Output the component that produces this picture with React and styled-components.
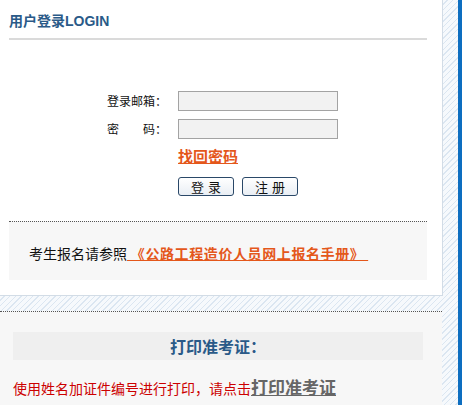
import React from "react";
import styled, { createGlobalStyle } from "styled-components";

const GlobalStyle = createGlobalStyle`
  html, body { margin: 0; padding: 0; }
  body {
    font-family: "Noto Sans CJK SC", "Liberation Sans", sans-serif;
    background: #fff;
  }
  *, *::before, *::after { box-sizing: border-box; }
`;

const Page = styled.div`
  width: 462px;
  height: 405px;
  overflow: hidden;
  display: flex;
  background-color: #f6f9fc;
  background-image: repeating-linear-gradient(
    135deg,
    #dbe6f1 0px,
    #dbe6f1 1px,
    #f6f9fc 1px,
    #f6f9fc 4px
  );
`;

const Main = styled.div`
  width: 443px;
  display: flex;
  flex-direction: column;
`;

const Gutter = styled.div`
  flex: 1;
`;

const BlueBar = styled.div`
  width: 4px;
  background: #0d6ec0;
`;

const LoginPanel = styled.section`
  height: 296px;
  background: #fff;
  border-right: 1px solid #d2dce6;
  border-bottom: 1px solid #d2dce6;
  padding: 13px 15px 0 9px;
  display: flex;
  flex-direction: column;
`;

const Title = styled.h2`
  margin: 0;
  font-size: 14px;
  line-height: 16px;
  font-weight: bold;
  color: #2a5a88;
  font-family: "Liberation Sans", "Noto Sans CJK SC", sans-serif;
`;

const TitleRule = styled.div`
  margin-top: 9px;
  height: 2px;
  background: #dadada;
`;

const Form = styled.div`
  margin-top: 51px;
  display: grid;
  grid-template-columns: 158px 160px;
  column-gap: 11px;
  row-gap: 8px;
  align-items: center;
`;

const Label = styled.label`
  text-align: right;
  font-size: 12px;
  line-height: 20px;
  height: 20px;
  color: #111;
  white-space: pre;
`;

const Input = styled.input`
  display: block;
  width: 160px;
  height: 20px;
  margin: 0;
  border: 1px solid #a3a3a3;
  background: #f2f2f2;
  outline: none;
`;

const Cell = styled.div`
  grid-column: 2;
  display: flex;
  height: 18px;
`;

const Forgot = styled.a`
  display: block;
  font-size: 15px;
  line-height: 17px;
  height: 18px;
  font-weight: bold;
  color: #e4571b;
  text-decoration: underline;
  cursor: pointer;
`;

const Buttons = styled.div`
  grid-column: 2;
  display: flex;
  gap: 8px;
  margin-top: 4px;
`;

const Button = styled.button`
  width: 56px;
  height: 19px;
  padding: 0;
  border: 1px solid #2a4868;
  border-radius: 3px;
  background: linear-gradient(#ffffff, #e9eef4);
  font-family: "Noto Sans CJK SC", sans-serif;
  font-size: 13px;
  line-height: 17px;
  color: #111;
  letter-spacing: 4px;
  text-indent: 4px;
  cursor: pointer;
`;

const Notice = styled.div`
  margin-top: 25px;
  border-top: 1px dotted #555;
  background: #f7f7f7;
  padding: 4px 0 0 20px;
  height: 59px;
  display: flex;
  align-items: center;
  font-size: 14px;
  color: #111;
`;

const ManualLink = styled.a`
  font-weight: bold;
  color: #e4571b;
  text-decoration: underline;
  white-space: pre;
  letter-spacing: 0.6px;
  cursor: pointer;
`;

const PrintPanel = styled.section`
  width: 442px;
  margin-top: 15px;
  flex: 1;
  border-top: 1px dotted #555;
  background: #f7f7f7;
  padding: 20px 19px 0 13px;
`;

const PrintHeader = styled.h3`
  margin: 0;
  height: 28px;
  line-height: 28px;
  background: #efefef;
  text-align: center;
  font-size: 16px;
  font-weight: bold;
  color: #2a5a88;
`;

const PrintNote = styled.p`
  margin: 17px 0 0;
  font-size: 14px;
  line-height: 20px;
  color: #cc0000;
  white-space: nowrap;
`;

const PrintLink = styled.a`
  font-size: 17px;
  font-weight: bold;
  color: #666;
  text-decoration: underline;
  cursor: pointer;
`;

export default function App() {
  return (
    <>
      <GlobalStyle />
      <Page>
        <Main>
          <LoginPanel>
            <Title>用户登录LOGIN</Title>
            <TitleRule />
            <Form>
              <Label>登录邮箱：</Label>
              <Input type="text" />
              <Label>{"密　　码："}</Label>
              <Input type="password" />
              <Cell>
                <Forgot>找回密码</Forgot>
              </Cell>
              <Buttons>
                <Button>登录</Button>
                <Button>注册</Button>
              </Buttons>
            </Form>
            <Notice>
              考生报名请参照<ManualLink>{" 《公路工程造价人员网上报名手册》 "}</ManualLink>
            </Notice>
          </LoginPanel>
          <PrintPanel>
            <PrintHeader>打印准考证：</PrintHeader>
            <PrintNote>
              使用姓名加证件编号进行打印，请点击<PrintLink>打印准考证</PrintLink>
            </PrintNote>
          </PrintPanel>
        </Main>
        <Gutter />
        <BlueBar />
      </Page>
    </>
  );
}
